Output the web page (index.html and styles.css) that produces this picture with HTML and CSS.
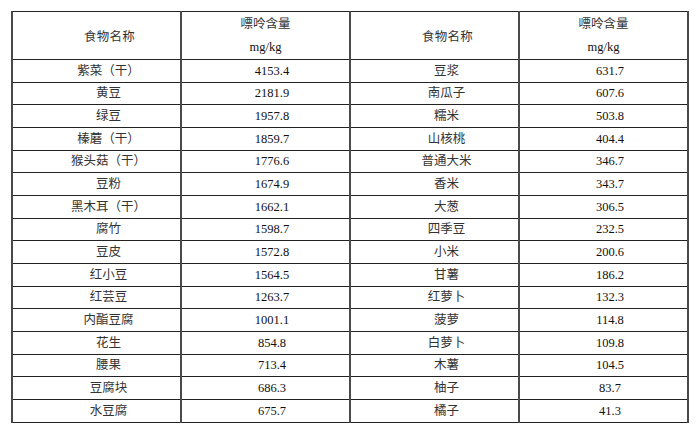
FILE: index.html
```html
<!DOCTYPE html>
<html lang="zh-CN">
<head>
<meta charset="utf-8">
<title>食物嘌呤含量</title>
<link rel="stylesheet" href="styles.css">
</head>
<body>
<table class="purine">
  <colgroup><col class="c"><col class="c"><col class="c"><col class="c"></colgroup>
  <thead>
    <tr class="head">
      <th class="name-h">食物名称</th>
      <th class="val-h"><span class="ln">嘌呤含量</span><span class="ln en">mg/kg</span></th>
      <th class="name-h">食物名称</th>
      <th class="val-h"><span class="ln">嘌呤含量</span><span class="ln en">mg/kg</span></th>
    </tr>
  </thead>
  <tbody>
    <tr><td class="name">紫菜（干）</td><td class="num">4153.4</td><td class="name">豆浆</td><td class="num">631.7</td></tr>
    <tr><td class="name">黄豆</td><td class="num">2181.9</td><td class="name">南瓜子</td><td class="num">607.6</td></tr>
    <tr><td class="name">绿豆</td><td class="num">1957.8</td><td class="name">糯米</td><td class="num">503.8</td></tr>
    <tr><td class="name">榛蘑（干）</td><td class="num">1859.7</td><td class="name">山核桃</td><td class="num">404.4</td></tr>
    <tr><td class="name">猴头菇（干）</td><td class="num">1776.6</td><td class="name">普通大米</td><td class="num">346.7</td></tr>
    <tr><td class="name">豆粉</td><td class="num">1674.9</td><td class="name">香米</td><td class="num">343.7</td></tr>
    <tr><td class="name">黑木耳（干）</td><td class="num">1662.1</td><td class="name">大葱</td><td class="num">306.5</td></tr>
    <tr><td class="name">腐竹</td><td class="num">1598.7</td><td class="name">四季豆</td><td class="num">232.5</td></tr>
    <tr><td class="name">豆皮</td><td class="num">1572.8</td><td class="name">小米</td><td class="num">200.6</td></tr>
    <tr><td class="name">红小豆</td><td class="num">1564.5</td><td class="name">甘薯</td><td class="num">186.2</td></tr>
    <tr><td class="name">红芸豆</td><td class="num">1263.7</td><td class="name">红萝卜</td><td class="num">132.3</td></tr>
    <tr><td class="name">内酯豆腐</td><td class="num">1001.1</td><td class="name">菠萝</td><td class="num">114.8</td></tr>
    <tr><td class="name">花生</td><td class="num">854.8</td><td class="name">白萝卜</td><td class="num">109.8</td></tr>
    <tr><td class="name">腰果</td><td class="num">713.4</td><td class="name">木薯</td><td class="num">104.5</td></tr>
    <tr><td class="name">豆腐块</td><td class="num">686.3</td><td class="name">柚子</td><td class="num">83.7</td></tr>
    <tr><td class="name">水豆腐</td><td class="num">675.7</td><td class="name">橘子</td><td class="num">41.3</td></tr>
  </tbody>
</table>
</body>
</html>
```

FILE: styles.css
```css
html, body {
  margin: 0;
  padding: 0;
  background: #ffffff;
}

body {
  padding: 11px 0 0 11px;
  font-family: "Liberation Serif", "Noto Sans CJK SC", serif;
  color: #1e1e1e;
}

.purine {
  border-collapse: collapse;
  table-layout: fixed;
  width: 677px;
}

.purine .c {
  width: 169px;
}

.purine th,
.purine td {
  border-top: 1px solid #222222;
  border-bottom: 1px solid #222222;
  border-left: 2px solid #4a4a4a;
  border-right: 2px solid #4a4a4a;
  padding: 0;
  text-align: center;
  font-weight: normal;
  vertical-align: middle;
  white-space: nowrap;
}

.purine .head th {
  height: 45px;
}

.purine th.name-h {
  font-size: 12.5px;
  padding-left: 26px;
  letter-spacing: 0.3px;
  color: #333333;
}

.purine th.val-h {
  font-size: 12.5px;
  line-height: 23px;
  padding-top: 1px;
}

.ln {
  display: block;
}

.val-h .ln:first-child {
  color: #333333;
}

.ln.en {
  font-size: 12.5px;
  color: #111111;
}

.purine tbody td {
  height: 21.67px;
  line-height: 16px;
}

.purine td.name {
  font-size: 12.5px;
  padding-left: 24px;
  color: #333333;
}

.purine td.num {
  font-size: 12.5px;
  padding-left: 13px;
  color: #111111;
}
```
